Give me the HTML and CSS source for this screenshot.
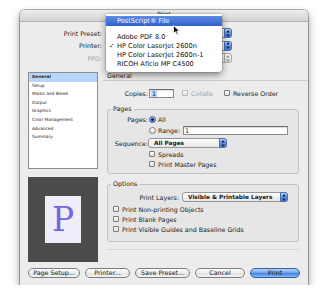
FILE: index.html
```html
<!DOCTYPE html>
<html lang="en">
<head>
  <meta charset="UTF-8" />
  <title>Print</title>
  <link rel="stylesheet" href="styles.css">
</head>
<body>

  <div class="window">
    <div class="titlebar">Print</div>

    <!-- Preset / printer popups -->
    <div class="presets">
      <span class="label">Print Preset:</span>
      <div class="popup wide"><span></span><span class="stepper"><svg width="4" height="7" viewBox="0 0 4 7"><path d="M2 0L4 2.6H0ZM2 7L4 4.4H0Z"/></svg></span></div>
      <span class="label">Printer:</span>
      <div class="popup wide"><span></span><span class="stepper"><svg width="4" height="7" viewBox="0 0 4 7"><path d="M2 0L4 2.6H0ZM2 7L4 4.4H0Z"/></svg></span></div>
      <span class="label dim">PPD:</span>
      <div class="popup wide off"><span></span><span class="stepper"><svg width="4" height="7" viewBox="0 0 4 7"><path d="M2 0L4 2.6H0ZM2 7L4 4.4H0Z"/></svg></span></div>
    </div>

    <div class="main">
      <!-- Left column -->
      <div class="sidebar">
        <ul class="panel-list">
          <li class="active">General</li>
          <li>Setup</li>
          <li>Marks and Bleed</li>
          <li>Output</li>
          <li>Graphics</li>
          <li>Color Management</li>
          <li>Advanced</li>
          <li>Summary</li>
        </ul>
        <div class="preview">
          <div class="page">P</div>
        </div>
      </div>

      <!-- General pane -->
      <div class="pane">
        <div class="pane-title">General</div>

        <div class="copies">
          <span class="lbl">Copies:</span>
          <span class="field copies-field"><span class="sel">1</span></span>
          <span class="check collate dim"><span class="box"></span>Collate</span>
          <span class="check reverse"><span class="box"></span>Reverse Order</span>
        </div>

        <fieldset class="group pages">
          <legend>Pages</legend>
          <div class="row">
            <span class="lbl">Pages:</span>
            <span class="radio on"></span><span class="radio-text">All</span>
          </div>
          <div class="row range">
            <span class="lbl"></span>
            <span class="radio"></span><span class="radio-text">Range:</span>
            <span class="field range-field">1</span>
          </div>
          <div class="row sequence">
            <span class="lbl">Sequence:</span>
            <div class="popup seq-popup"><span>All Pages</span><span class="stepper"><svg width="4" height="7" viewBox="0 0 4 7"><path d="M2 0L4 2.6H0ZM2 7L4 4.4H0Z"/></svg></span></div>
          </div>
          <div class="row indent spreads"><span class="check"><span class="box"></span>Spreads</span></div>
          <div class="row indent"><span class="check"><span class="box"></span>Print Master Pages</span></div>
        </fieldset>

        <fieldset class="group options">
          <legend>Options</legend>
          <div class="row">
            <span class="lbl layers-lbl">Print Layers:</span>
            <div class="popup layers-popup"><span>Visible &amp; Printable Layers</span><span class="stepper"><svg width="4" height="7" viewBox="0 0 4 7"><path d="M2 0L4 2.6H0ZM2 7L4 4.4H0Z"/></svg></span></div>
          </div>
          <div class="row opt first"><span class="check"><span class="box"></span>Print Non-printing Objects</span></div>
          <div class="row opt"><span class="check"><span class="box"></span>Print Blank Pages</span></div>
          <div class="row opt"><span class="check"><span class="box"></span>Print Visible Guides and Baseline Grids</span></div>
        </fieldset>

        <div class="rule"></div>
      </div>
    </div>

    <!-- Bottom buttons -->
    <div class="buttons">
      <button class="btn w-setup">Page Setup...</button>
      <button class="btn w-printer">Printer...</button>
      <button class="btn w-save">Save Preset...</button>
      <button class="btn w-cancel">Cancel</button>
      <button class="btn default w-print">Print</button>
    </div>

    <!-- Open printer menu -->
    <ul class="menu">
      <li class="hl">PostScript® File</li>
      <li class="sep"></li>
      <li>Adobe PDF 8.0</li>
      <li><span class="tick">✓</span>HP Color LaserJet 2600n</li>
      <li>HP Color LaserJet 2600n-1</li>
      <li>RICOH Aficio MP C4500</li>
    </ul>

    <svg class="cursor" width="8" height="11" viewBox="0 0 8 11">
      <path d="M0.5 0.5V8.5L2.5 6.6L4 9.8L5.3 9.2L3.8 6.1H6.5Z" fill="#000" stroke="#fff" stroke-width="0.8"/>
    </svg>
  </div>

</body>
</html>
```

FILE: styles.css
```css
* {
  margin: 0;
  padding: 0;
  box-sizing: border-box;
}

body {
  background: #fff;
  font-family: "DejaVu Sans", sans-serif;
  font-size: 6.3px;
  color: #1a1a1a;
}

.window {
  position: relative;
  margin: 10px 0 0 20px;
  width: 288px;
  height: 275px;
  background: #ececec;
  border-radius: 5px 5px 0 0;
  box-shadow: 0 0 0 1px rgba(0, 0, 0, 0.28), 0 4px 8px rgba(0, 0, 0, 0.45);
}

.titlebar {
  height: 12px;
  background: linear-gradient(#eeeeee, #d2d2d2);
  border-radius: 5px 5px 0 0;
  border-bottom: 1px solid #b5b5b5;
  text-align: center;
  line-height: 8px;
  font-size: 5.8px;
  color: #333;
}

.dim {
  color: #a3a3a3;
}

/* Popups */
.presets {
  display: grid;
  grid-template-columns: 82px 126px;
  grid-auto-rows: 10px;
  column-gap: 4px;
  row-gap: 2.5px;
  padding-top: 6px;
  align-items: center;
}

.label {
  text-align: right;
}

.popup {
  height: 10px;
  border: 1px solid #969696;
  border-radius: 3px;
  background: linear-gradient(#ffffff, #e6e6e6);
  display: flex;
  align-items: center;
  justify-content: space-between;
  padding-left: 5px;
  font-weight: bold;
  font-size: 5.8px;
  line-height: 8px;
}

.stepper {
  width: 8px;
  height: 10px;
  margin-right: -1px;
  border-radius: 0 3px 3px 0;
  border: 1px solid #4a6fb0;
  background: linear-gradient(#b6d4f8, #5b93e6 55%, #3f7de0);
  display: flex;
  align-items: center;
  justify-content: center;
}

.stepper svg {
  fill: #1b2c52;
}

.popup.off .stepper {
  border-color: #aaa;
  background: linear-gradient(#fafafa, #dedede);
}

.popup.off .stepper svg {
  fill: #9a9a9a;
}

.popup.off {
  border-color: #b5b5b5;
}

/* Layout */
.main {
  display: flex;
  margin-top: 9px;
  padding-left: 8px;
}

.sidebar {
  width: 70px;
  display: flex;
  flex-direction: column;
  gap: 8px;
}

.panel-list {
  list-style: none;
  height: 97px;
  background: #fff;
  border: 1px solid #8c8c8c;
  font-size: 4.3px;
}

.panel-list li {
  height: 8.6px;
  line-height: 8.6px;
  padding-left: 3px;
  color: #222;
}

.panel-list li.active {
  background: #b7d4fb;
  font-weight: bold;
}

.preview {
  height: 85px;
  background: #4b4b4b;
  display: flex;
  align-items: center;
  justify-content: center;
}

.page {
  width: 36px;
  height: 47px;
  background: #eeedf9;
  display: flex;
  align-items: center;
  justify-content: center;
  font-family: "DejaVu Serif", serif;
  font-size: 33px;
  color: #7467dd;
}

.pane {
  flex: 1;
  margin-left: 5px;
}

.pane-title {
  height: 9px;
  line-height: 8px;
  padding-left: 4px;
  border-bottom: 1px solid #cdcdcd;
}

.copies {
  display: flex;
  align-items: center;
  height: 10px;
  margin-top: 7px;
}

.copies .lbl {
  width: 45px;
  text-align: right;
}

.field {
  height: 9px;
  border: 1px solid #8a8a8a;
  border-top-color: #6f6f6f;
  background: #fff;
  box-shadow: inset 0 1px 1px rgba(0, 0, 0, 0.15);
  line-height: 7px;
  padding-left: 1px;
}

.copies-field {
  width: 25px;
  margin-left: 1px;
}

.sel {
  background: #b7d4fb;
  padding: 0 1px;
}

.check {
  display: flex;
  align-items: center;
  gap: 3px;
}

.box {
  width: 6px;
  height: 6px;
  border: 1px solid #7b7b7b;
  border-radius: 1px;
  background: linear-gradient(#ffffff, #dedede);
}

.check.dim .box {
  border-color: #b8b8b8;
}

.collate {
  margin-left: 8px;
}

.reverse {
  margin-left: 11px;
}

/* Group boxes */
.group {
  margin: 7px 9px 0 4px;
  border: 1px solid #c2c2c2;
  border-radius: 3px;
  background: rgba(0, 0, 0, 0.025);
  padding: 1px 0 4px;
}

.group legend {
  margin-left: 3px;
  padding: 0 2px;
  line-height: 8px;
}

.row {
  display: flex;
  align-items: center;
  height: 10px;
}

.row .lbl {
  width: 40px;
  text-align: right;
  margin-right: 1px;
}

.radio {
  width: 7px;
  height: 7px;
  border-radius: 50%;
  border: 1px solid #7a7a7a;
  background: linear-gradient(#ffffff, #dcdcdc);
}

.radio.on {
  border-color: #3a5f9e;
  background: radial-gradient(circle, #10203f 0 1.2px, transparent 1.5px), linear-gradient(#a8cbf6, #3f7de0);
}

.radio-text {
  margin-left: 2px;
}

.range {
  margin-top: 1px;
}

.range-field {
  width: 105px;
  margin-left: 3px;
}

.sequence {
  margin-top: 3px;
}

.seq-popup {
  width: 79px;
  margin-left: -1px;
}

.indent {
  padding-left: 41px;
}

.spreads {
  margin-top: 1px;
}

.options {
  margin-top: 6px;
  padding: 4px 0 7px;
}

.row .layers-lbl {
  width: 71px;
  margin-right: 3px;
}

.layers-popup {
  width: 106px;
}

.opt {
  padding-left: 5px;
}

.opt.first {
  margin-top: 2px;
}

.rule {
  margin: 7px 9px 0 4px;
  border-top: 1px solid #d6d6d6;
}

/* Buttons */
.buttons {
  display: flex;
  gap: 5px;
  padding-left: 8px;
  margin-top: 6px;
}

.btn {
  height: 10px;
  border: 1px solid #7d7d7d;
  border-radius: 5px;
  background: linear-gradient(#ffffff, #ececec 50%, #e0e0e0 51%, #f4f4f4);
  font-family: "DejaVu Sans", sans-serif;
  font-size: 6.3px;
  line-height: 8px;
  color: #1a1a1a;
  text-align: center;
}

.btn.default {
  border-color: #36609f;
  background: linear-gradient(#b3d3fa, #6aa2ee 50%, #3d7fe3 51%, #86bbf6);
}

.w-setup { width: 52px; }
.w-printer { width: 45px; }
.w-save { width: 55px; }
.w-cancel { width: 50px; }
.w-print { width: 50px; }

/* Open menu */
.menu {
  position: absolute;
  left: 86px;
  top: 4px;
  width: 116px;
  height: 58px;
  list-style: none;
  background: rgba(255, 255, 255, 0.97);
  border-radius: 0 0 4px 4px;
  box-shadow: 0 3px 7px rgba(0, 0, 0, 0.45), 0 0 0 0.5px rgba(0, 0, 0, 0.2);
  padding-top: 2px;
  font-size: 6.6px;
  color: #111;
}

.menu li {
  height: 9px;
  line-height: 9px;
  padding-left: 11px;
}

.menu li.hl {
  height: 10px;
  line-height: 10px;
  background: linear-gradient(#5d8be1, #2f62cf);
  color: #fff;
}

.menu li.sep {
  height: 7px;
}

.tick {
  display: inline-block;
  width: 8px;
  margin-left: -8px;
}

.cursor {
  position: absolute;
  left: 153px;
  top: 15px;
}
```
